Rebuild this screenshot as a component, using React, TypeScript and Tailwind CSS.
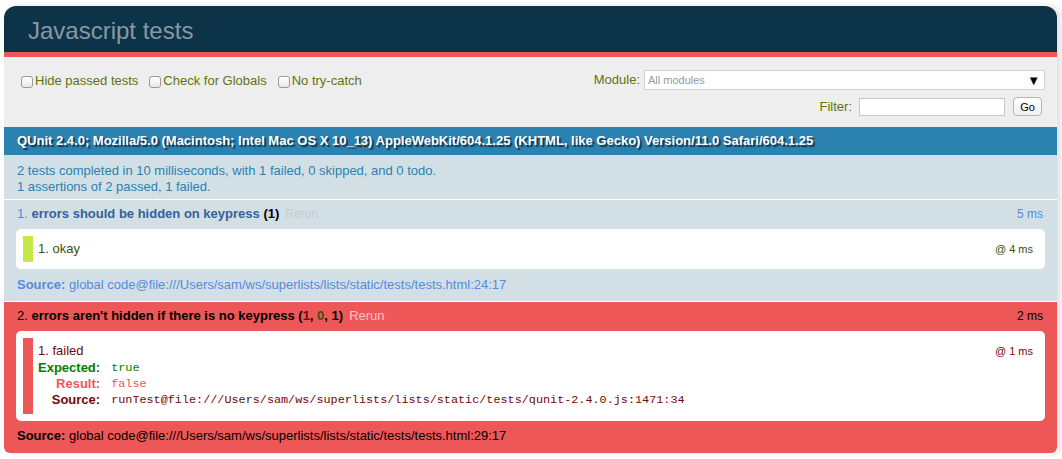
const sans = { fontFamily: '"Liberation Sans", Arial, sans-serif' };
const mono = { fontFamily: '"Liberation Mono", "Courier New", monospace' };

const Checkbox = ({ label }: { label: string }) => (
    <label className="flex items-center gap-[2px] text-[13px] text-[#5e740b]">
        <span className="inline-block w-[12px] h-[12px] mt-[3px] rounded-[3px] border border-[#9a9a9a] bg-gradient-to-b from-white to-[#e8e8e8]"></span>
        {label}
    </label>
);

const App = () => {
    return (
        <div className="bg-white h-[459px] pt-[6px] pl-[4px] pr-[5px]" style={sans}>
            <div className="shadow-[4px_0_6px_rgba(0,0,0,0.12)] rounded-t-[12px] rounded-b-[6px]">
                {/* header */}
                <h1 className="h-[46px] bg-[#0d3349] rounded-t-[12px] pl-[24px] pt-[4px] flex items-center text-[24px] text-[#8699a4] font-normal">
                    Javascript tests
                </h1>
                <div className="h-[5px] bg-[#ee5757]"></div>

                {/* toolbar */}
                <div className="h-[70px] bg-[#eeeeee] flex justify-between items-start pl-[17px] pr-[12px]">
                    <div className="flex items-start gap-[11px] pt-[14px]">
                        <Checkbox label="Hide passed tests" />
                        <Checkbox label="Check for Globals" />
                        <Checkbox label="No try-catch" />
                    </div>
                    <div className="flex flex-col items-end pt-[13px] gap-[7px]">
                        <div className="flex items-center gap-[4px] text-[13px] text-[#5e740b]">
                            Module:
                            <div className="w-[401px] h-[20px] bg-white border border-[#d0d0d0] flex items-center justify-between pl-[3px] pr-[4px]">
                                <span className="text-[11px] text-[#999]">All modules</span>
                                <span className="text-[13px] text-black leading-none">▼</span>
                            </div>
                        </div>
                        <div className="flex items-center text-[13px] text-[#5e740b] mr-[3px]">
                            Filter:
                            <div className="w-[146px] h-[18px] bg-white border border-[#c8c8c8] ml-[7px]"></div>
                            <div className="ml-[8px] w-[29px] h-[19px] rounded-[4px] border border-[#b5b5b5] bg-gradient-to-b from-white to-[#f0f0f0] flex items-center justify-center text-[11px] text-black">
                                Go
                            </div>
                        </div>
                    </div>
                </div>

                {/* banner */}
                <h2 className="h-[28px] bg-[#2b81af] text-white text-[13px] font-bold flex items-center pl-[13px] [text-shadow:rgba(0,0,0,0.6)_2px_2px_1px]">
                    QUnit 2.4.0; Mozilla/5.0 (Macintosh; Intel Mac OS X 10_13) AppleWebKit/604.1.25 (KHTML, like Gecko) Version/11.0 Safari/604.1.25
                </h2>
                <div className="h-[45px] bg-[#d2e0e6] text-[#2b81af] text-[13px] leading-[16px] pl-[13px] pt-[8px] border-b border-white">
                    <div>2 tests completed in 10 milliseconds, with 1 failed, 0 skipped, and 0 todo.</div>
                    <div>1 assertions of 2 passed, 1 failed.</div>
                </div>

                {/* test 1 */}
                <div className="bg-[#d2e0e6] text-[#528ce0] text-[13px] leading-[16px] px-[12px] pt-[6px] pb-[8px] border-b border-white">
                    <div className="flex justify-between pl-[1px]">
                        <div>
                            1. <b className="text-[#366097]">errors should be hidden on keypress</b>{' '}
                            <b className="text-black">(1)</b>
                            <span className="text-[12px] text-[#c2ccd1] ml-[6px]">Rerun</span>
                        </div>
                        <span className="text-[12px] mr-[2px]">5 ms</span>
                    </div>
                    <div className="bg-white rounded-[5px] p-[7px] mt-[7px]">
                        <div className="border-l-[10px] border-[#c6e746] p-[5px] flex justify-between text-[#3c510c]">
                            <span>1. okay</span>
                            <span className="text-[11px]">@ 4 ms</span>
                        </div>
                    </div>
                    <div className="mt-[8px] pl-[1px]">
                        <b>Source:</b> global code@file:///Users/sam/ws/superlists/lists/static/tests/tests.html:24:17
                    </div>
                </div>

                {/* test 2 */}
                <div className="bg-[#ee5757] text-black text-[13px] leading-[16px] px-[12px] pt-[6px] pb-[9px] rounded-b-[6px]">
                    <div className="flex justify-between pl-[1px]">
                        <div>
                            2. <b>errors aren't hidden if there is no keypress</b>{' '}
                            <b>
                                (<span className="text-[#710909]">1</span>, <span className="text-[#3c510c]">0</span>, 1)
                            </b>
                            <span className="text-[13px] text-[#f4c6c6] ml-[6px]">Rerun</span>
                        </div>
                        <span className="text-[12px] mr-[2px]">2 ms</span>
                    </div>
                    <div className="bg-white rounded-[5px] p-[7px] mt-[7px]">
                        <div className="border-l-[10px] border-[#ee5757] px-[5px] pt-[5px] pb-[6px] text-[#710909]">
                            <div className="flex justify-between">
                                <span>1. failed</span>
                                <span className="text-[11px]">@ 1 ms</span>
                            </div>
                            <table className="mt-[1px]">
                                <tbody>
                                    <tr>
                                        <th className="text-right pr-[11px] text-[#008000] font-bold">Expected:</th>
                                        <td className="text-[#008000] text-[11.8px]" style={mono}>true</td>
                                    </tr>
                                    <tr>
                                        <th className="text-right pr-[11px] text-[#ee5757] font-bold">Result:</th>
                                        <td className="text-[#ee5757] text-[11.8px]" style={mono}>false</td>
                                    </tr>
                                    <tr>
                                        <th className="text-right pr-[11px] text-[#710909] font-bold">Source:</th>
                                        <td className="text-[#710909] text-[11.8px]" style={mono}>runTest@file:///Users/sam/ws/superlists/lists/static/tests/qunit-2.4.0.js:1471:34</td>
                                    </tr>
                                </tbody>
                            </table>
                        </div>
                    </div>
                    <div className="mt-[7px] pl-[1px]">
                        <b>Source:</b> global code@file:///Users/sam/ws/superlists/lists/static/tests/tests.html:29:17
                    </div>
                </div>
            </div>
        </div>
    );
};

export default App;
